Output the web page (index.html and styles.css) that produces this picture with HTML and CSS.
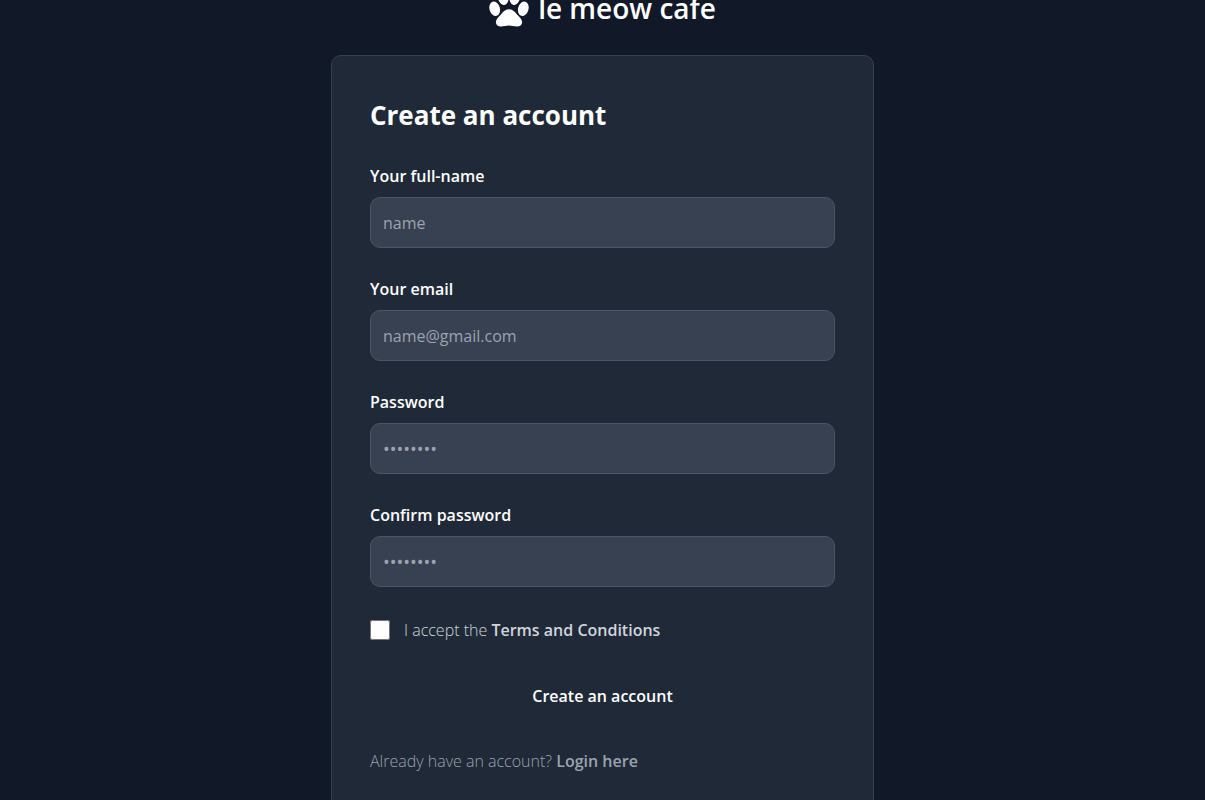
FILE: index.html
```html
<!DOCTYPE html>
<html lang="en">
<head>
<meta charset="utf-8">
<meta name="viewport" content="width=device-width, initial-scale=1">
<title>le meow cafe</title>
<link rel="stylesheet" href="styles.css">
</head>
<body>
<main class="page">
  <a class="brand" href="#">
    <svg class="brand-icon" viewBox="0 0 40 40" fill="currentColor" aria-hidden="true">
      <ellipse cx="14.2" cy="9.500" rx="5.2" ry="7.500" transform="rotate(-10 14.200 9.500)"/>
      <ellipse cx="25.8" cy="9.500" rx="5.2" ry="7.500" transform="rotate(10 25.800 9.500)"/>
      <ellipse cx="5.700" cy="20.800" rx="5.200" ry="7.300" transform="rotate(-16 5.700 20.800)"/>
      <ellipse cx="34.300" cy="20.800" rx="5.200" ry="7.300" transform="rotate(16 34.300 20.800)"/>
      <path d="M20 21.200c-4.300 0-6.200 3.300-8.500 5.800-2.500 2.600-4.800 4.600-4.600 7.600.200 2.900 2.300 3.900 5.100 3.900 3 0 5.300-1 8-1s5 1 8 1c2.800 0 4.900-1 5.100-3.900.200-3-2.100-5-4.600-7.600-2.300-2.500-4.200-5.800-8.500-5.800z"/>
    </svg>
    <span>le meow cafe</span>
  </a>
  <section class="card">
    <h1 class="title">Create an account</h1>
    <form class="form">
      <div class="field">
        <label class="label" for="name">Your full-name</label>
        <input class="input" id="name" type="text" placeholder="name">
      </div>
      <div class="field">
        <label class="label" for="email">Your email</label>
        <input class="input" id="email" type="email" placeholder="name@gmail.com">
      </div>
      <div class="field">
        <label class="label" for="password">Password</label>
        <input class="input input-password" id="password" type="password" placeholder="••••••••">
      </div>
      <div class="field">
        <label class="label" for="confirm">Confirm password</label>
        <input class="input input-password" id="confirm" type="password" placeholder="••••••••">
      </div>
      <div class="terms">
        <input class="checkbox" id="terms" type="checkbox">
        <label class="terms-label" for="terms">I accept the <a class="link" href="#">Terms and Conditions</a></label>
      </div>
      <button class="submit" type="submit">Create an account</button>
      <p class="login">Already have an account? <a class="link" href="#">Login here</a></p>
    </form>
  </section>
</main>
</body>
</html>
```
FILE: styles.css
```css
* { box-sizing: border-box; }

body {
  margin: 0;
  min-height: 100vh;
  overflow: hidden;
  background: #111827;
  color: #fff;
  font-family: "Segoe UI", "Open Sans", "Noto Sans", sans-serif;
  font-size: 16px;
  line-height: 24px;
}

.page {
  display: flex;
  flex-direction: column;
  align-items: center;
  margin-top: -12px;
}

.brand {
  display: flex;
  align-items: center;
  gap: 9px;
  margin-bottom: 27px;
  color: #fff;
  font-size: 28px;
  font-weight: 600;
  line-height: 40px;
  text-decoration: none;
}

.brand-icon {
  width: 40px;
  height: 40px;
}

.card {
  width: 100%;
  max-width: 543px;
  padding: 38px;
  border: 1px solid #374151;
  border-radius: 10px;
  background: #1f2937;
}

.title {
  margin: 0 0 28px;
  font-size: 26px;
  font-weight: 700;
  line-height: 42px;
}

.form {
  display: flex;
  flex-direction: column;
  gap: 29px;
}

.field {
  display: flex;
  flex-direction: column;
  gap: 9px;
}

.label {
  font-weight: 600;
}

.input {
  width: 100%;
  height: 51px;
  padding: 12px;
  border: 1px solid #4b5563;
  border-radius: 10px;
  background: #374151;
  color: #fff;
  font: inherit;
}

.input-password {
  font-size: 18px;
}

.input::placeholder {
  color: #9ca3af;
  opacity: 1;
}

.terms {
  display: flex;
  align-items: center;
  gap: 14px;
  min-height: 27px;
}

.checkbox {
  width: 20px;
  height: 20px;
  margin: 0;
}

.terms-label {
  color: #d1d5db;
  font-weight: 300;
}

.submit {
  padding: 12px 24px;
  border: 0;
  border-radius: 10px;
  background: transparent;
  color: #fff;
  font: inherit;
  font-weight: 600;
}

.login {
  margin: 0;
  color: #9ca3af;
  font-weight: 300;
}

.link {
  color: inherit;
  font-weight: 600;
  text-decoration: none;
}
```
